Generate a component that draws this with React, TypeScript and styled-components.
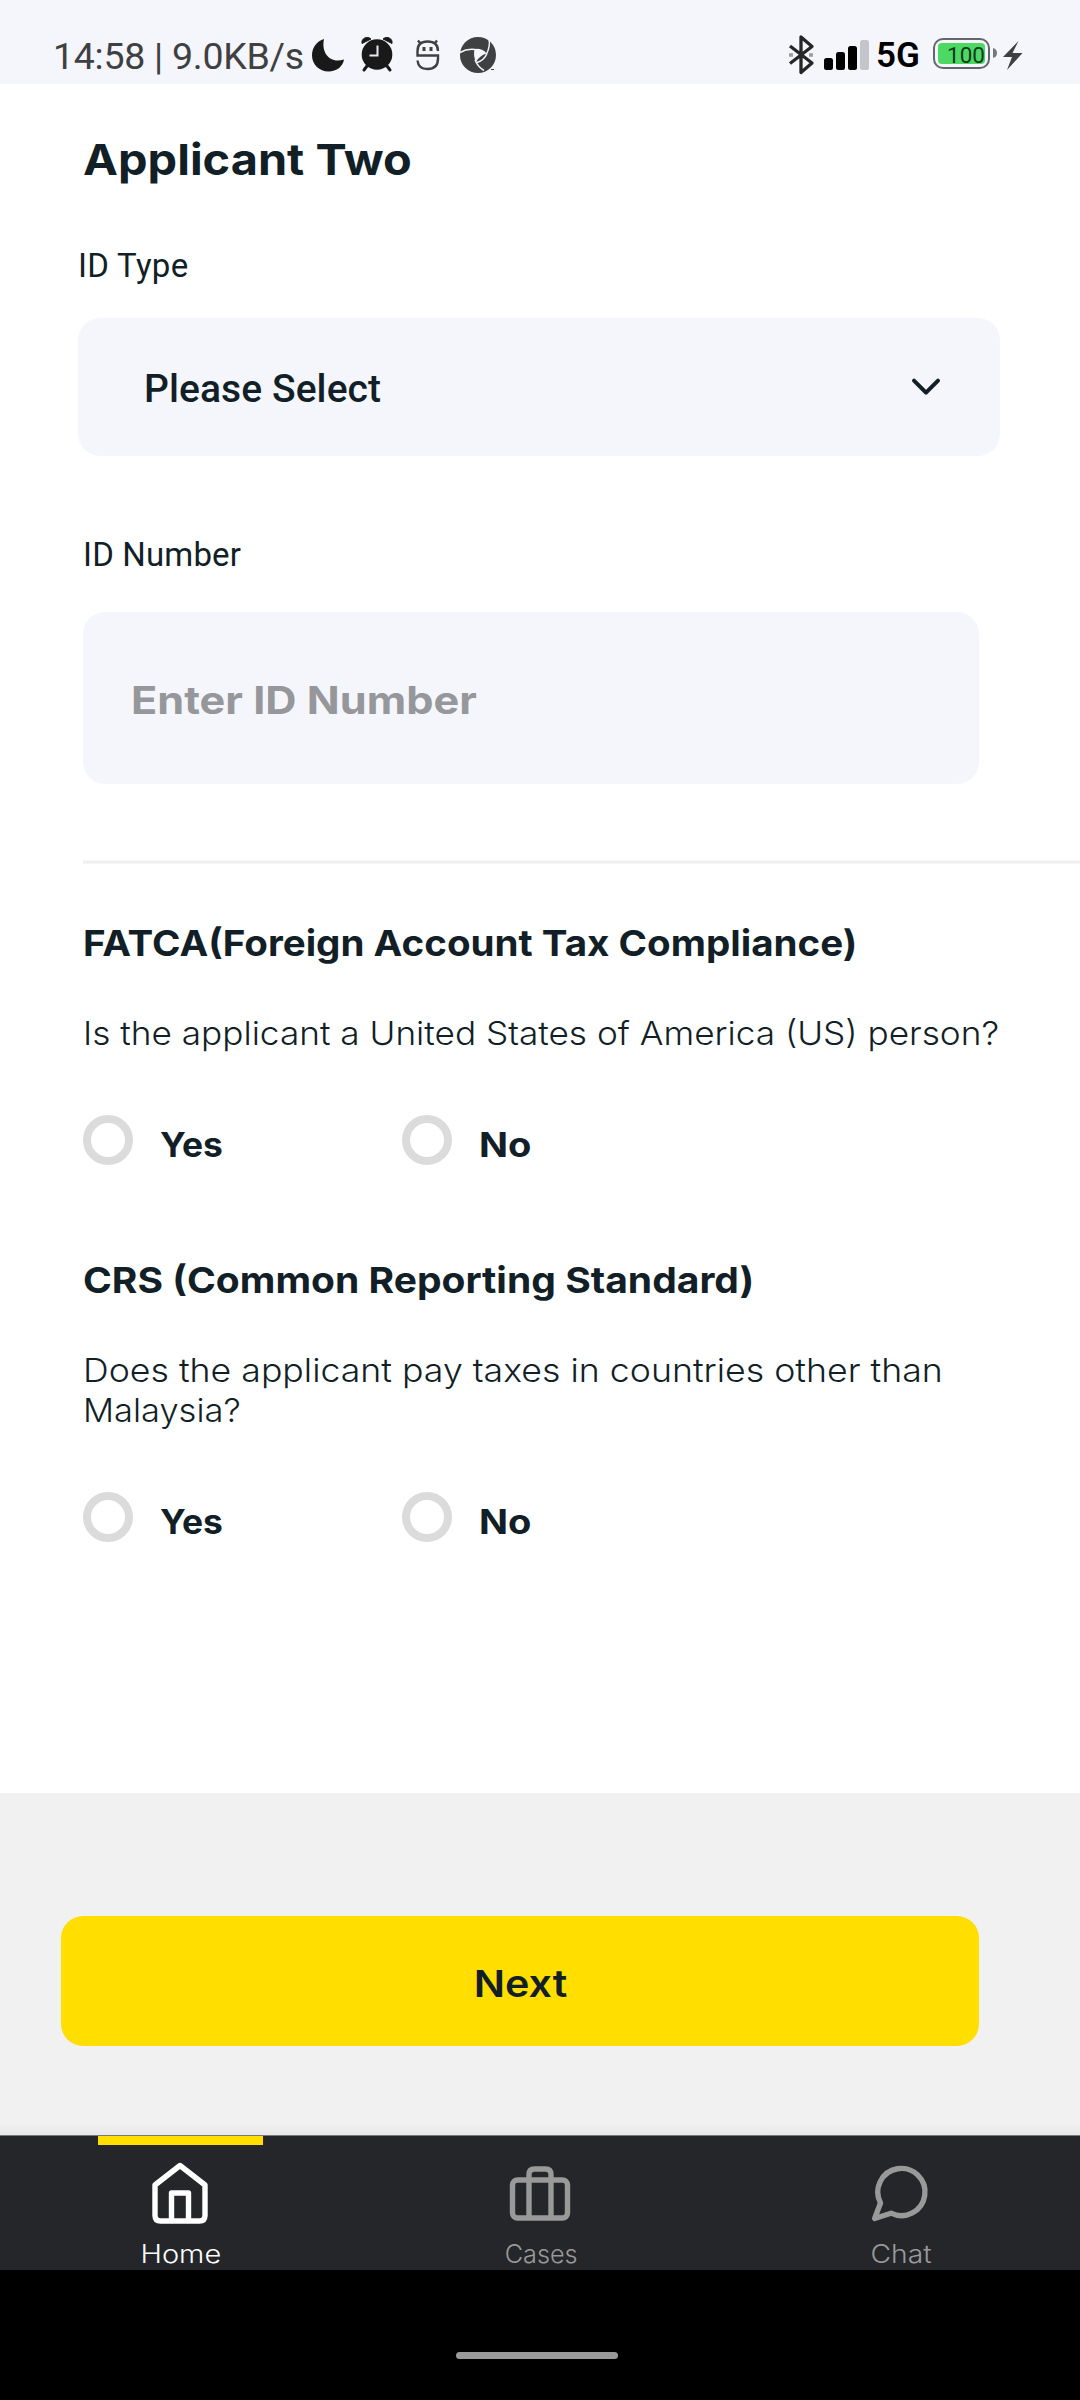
import React from "react";
import styled, { createGlobalStyle } from "styled-components";

const ink = "#121f27";
const display = `Inter, "Open Sans", sans-serif`;
const system = `Roboto, "Noto Sans", sans-serif`;

const GlobalStyle = createGlobalStyle`
  * { box-sizing: border-box; }
  body { margin: 0; background: #fff; color: ${ink}; font-family: ${display}; }
  h1, h2, p { margin: 0; }
  svg { display: block; flex: none; }
`;

const Screen = styled.div`
  display: flex;
  flex-direction: column;
  width: 1080px;
  height: 2400px;
  overflow: hidden;
  background: #fff;
`;

/* Widens the letterforms of the display face. */
const Wide = styled.span<{ $by: number; $center?: boolean }>`
  display: block;
  width: max-content;
  transform: scaleX(${(p) => p.$by});
  transform-origin: ${(p) => (p.$center ? "center" : "left")};
`;

const StatusBar = styled.header`
  display: flex;
  justify-content: space-between;
  height: 84px;
  padding: 27px 57px 0 53px;
  background: #f4f6fb;
  color: #3e4042;
  font-family: ${system};
`;
const StatusGroup = styled.div`
  display: flex;
  align-items: center;
  height: 56px;
`;
const Clock = styled.span`
  width: 258px;
  padding-top: 1px;
  font-size: 37.5px;
  line-height: 56px;
  letter-spacing: -0.27px;
  white-space: nowrap;
`;
const Network = styled.span`
  width: 63px;
  padding: 1px 0 0 6px;
  color: #000;
  font: 600 35px/56px ${system};
`;
const Battery = styled.span`
  display: flex;
  width: 57px;
  height: 31px;
  margin-top: -3px;
  padding: 3px;
  border: 2.5px solid #65666b;
  border-radius: 10px;
`;
const BatteryLevel = styled.span`
  flex: 1;
  border-radius: 4px;
  background: #4bd964;
  color: #15391c;
  font-size: 22.5px;
  line-height: 24px;
  text-align: right;
`;

const Form = styled.main`
  display: flex;
  flex-direction: column;
  align-items: flex-start;
  height: 1709px;
  padding: 50px 0 0 83px;
`;
const Title = styled.h1`
  font-size: 43px;
  font-weight: 700;
  line-height: 50px;
`;
const FieldLabel = styled.label<{ $top: number; $spacing: number; $outset?: boolean }>`
  margin: ${(p) => p.$top}px 0 0 ${(p) => (p.$outset ? -5 : 0)}px;
  font: 400 33px/40px ${system};
  letter-spacing: ${(p) => p.$spacing}px;
`;
const Select = styled.div`
  display: flex;
  align-items: center;
  justify-content: space-between;
  width: 922px;
  height: 138px;
  margin: 32px 0 0 -5px;
  padding: 0 58px 0 66px;
  border-radius: 22px;
  background: #f4f6fb;
  font: 500 39px/48px ${system};
`;
const SelectValue = styled.span`
  padding-top: 4px;
  letter-spacing: 0.08px;
`;
const Input = styled.div`
  display: flex;
  align-items: center;
  width: 896px;
  height: 172px;
  margin-top: 37px;
  padding: 3px 0 0 48px;
  border-radius: 22px;
  background: #f4f6fb;
  color: #96979b;
  font-size: 38px;
  font-weight: 700;
`;
const Divider = styled.div`
  align-self: stretch;
  height: 4px;
  margin-top: 76px;
  border: solid #f6f6f6;
  border-width: 1px 0;
  background: #efefef;
`;
const SectionTitle = styled.h2<{ $top: number }>`
  margin-top: ${(p) => p.$top}px;
  font-size: 36px;
  font-weight: 700;
  line-height: 44px;
`;
const Question = styled.p`
  margin-top: 48px;
  font-size: 33px;
  font-weight: 300;
  line-height: 40px;
`;
const RadioRow = styled.div`
  display: grid;
  grid-template-columns: 319px 319px;
  height: 50px;
  margin-top: 62px;
`;
const Option = styled.label`
  display: flex;
  gap: 27px;
  font-size: 34px;
  font-weight: 700;
  line-height: 60px;
`;
const Ring = styled.span`
  width: 50px;
  height: 50px;
  border: 8px solid #dbdbdb;
  border-radius: 50%;
`;

const Actions = styled.section`
  height: 342px;
  padding: 123px 101px 0 61px;
  background: linear-gradient(#f1f1f1 330px, #e9e9e9 342px);
`;
const NextButton = styled.button`
  display: flex;
  align-items: center;
  justify-content: center;
  width: 918px;
  height: 130px;
  padding: 5px 0 0 2px;
  border: 0;
  border-radius: 22px;
  background: #ffde00;
  color: ${ink};
  font: 600 37.5px/48px ${display};
`;

const TabBar = styled.nav`
  display: grid;
  grid-template-columns: repeat(3, 360px);
  height: 135px;
  border-top: 1px solid #77787a;
  background: #25262a;
`;
const Tab = styled.a<{ $active?: boolean }>`
  display: flex;
  flex-direction: column;
  align-items: center;
  color: ${(p) => (p.$active ? "#fff" : "#999")};
  font-size: 25px;
  font-weight: 300;
  line-height: 30px;
`;
const Indicator = styled.span<{ $active?: boolean }>`
  width: 165px;
  height: 9px;
  margin-bottom: 14px;
  background: ${(p) => (p.$active ? "#ffde00" : "transparent")};
`;
const TabLabel = styled.span`
  margin-top: 14px;
  padding-left: 2px;
`;
const SystemNav = styled.footer`
  display: flex;
  justify-content: center;
  height: 130px;
  padding: 82px 7px 0 0;
  background: #000;
`;
const Pill = styled.span`
  width: 162px;
  height: 7px;
  border-radius: 4px;
  background: #999;
`;

const StatusIcons = () => (
  <svg width="190" height="56" viewBox="311 27 190 56">
    <path d="M324 39c-3 14 6 25 20 20.500c-1 7-7.500 12-15.500 12c-9 0-16.500-7-16.500-16c0-8 5-14.500 12-16.500z" fill="#191919" />
    <g fill="#191919">
      <circle cx="377" cy="54.500" r="15.300" />
      <path d="M362 43.500c-1-5 5-8 9-4.500zM392 43.500c1-5-5-8-9-4.500z" stroke="#191919" strokeLinejoin="round" />
      <path d="M367 66l-3 4M387 66l3 4" stroke="#191919" strokeWidth="3" strokeLinecap="round" />
      <path d="M377.500 45.500v10h-8" fill="none" stroke="#e8e9ed" strokeWidth="2" />
    </g>
    <g fill="none" stroke="#3e4042" strokeWidth="2.400">
      <path d="M438 51c0-6.500-4-9.500-10.500-9.500s-10 3-10 9.500v4.500h20.500v3c0 7-4 10.500-10.500 10.500s-9.500-3-10-8.500M420 43l-2-2.500M435 43l2-2.500" />
      <path d="M424 47v4M431 47v4" strokeWidth="3" />
    </g>
    <circle cx="478" cy="55" r="18" fill="#3e4042" />
    <path
      d="M489 38.500q1.500 8-2.500 15.500M460 52.500q7-4 15-3M475 60q3 7 9 10.500M477 62.500q7-2 10-9"
      fill="none"
      stroke="#f4f6fb"
      strokeWidth="1.500"
    />
    <path d="M474.500 49q8-1 12 4.500q-7 2-10.500 8.500q-3-6-1.500-13z" fill="#f4f6fb" />
    <path d="M491 69.500h3" stroke="#3e4042" />
  </svg>
);

const Signals = () => (
  <svg width="82" height="56" viewBox="788 27 82 56">
    <path d="M790 46l22 17-11 9.500V37l11 9.500-22 17" fill="none" stroke="#252628" strokeWidth="3.300" strokeLinejoin="round" />
    <path d="M789 55h4M809 55h4" stroke="#9b9ca0" strokeWidth="3.500" />
    <rect x="824" y="58" width="9" height="12" rx="2.500" />
    <rect x="836" y="52" width="9" height="18" rx="2.500" />
    <rect x="848" y="46" width="9" height="24" rx="2.500" />
    <rect x="860" y="40" width="9" height="30" rx="2.500" fill="#c4c5ca" />
  </svg>
);

const Charging = () => (
  <svg width="33" height="56" viewBox="990 27 33 56" fill="#3e4042">
    <path d="M993 48q4 1 4 5t-4 5z" fill="#76777b" />
    <path d="M1018.500 41l-15.500 16h9l-5 13 15.500-17h-10z" />
  </svg>
);

const Chevron = () => (
  <svg width="32" height="20" viewBox="910 377 32 20" fill="none" stroke={ink} strokeWidth="4" strokeLinecap="round" strokeLinejoin="round">
    <path d="M914 380.700l12 12 12-12" />
  </svg>
);

const tabIcon = { width: 64, height: 66, fill: "none", stroke: "currentColor", strokeWidth: 5.4, strokeLinecap: "round", strokeLinejoin: "round" } as const;

const HomeIcon = () => (
  <svg {...tabIcon} viewBox="148 2159.500 64 66">
    <path d="M180 2166l25 19.500v30.500q0 5.500-5.500 5.500h-39q-5.500 0-5.500-5.500v-30.500z" />
    <path d="M171.500 2221v-27.500h17v27.500" />
  </svg>
);
const CasesIcon = () => (
  <svg {...tabIcon} viewBox="508 2159.500 64 66">
    <rect x="512.500" y="2180.500" width="55" height="38" rx="5" />
    <path d="M529 2218v-43q0-5.500 5.500-5.500h11q5.500 0 5.500 5.500v43" />
  </svg>
);
const ChatIcon = () => (
  <svg {...tabIcon} viewBox="868 2159.500 64 66">
    <path d="M880.500 2203.500a23.600 23.600 0 1 1 10.500 10.200l-16.300 5.300z" />
  </svg>
);

const options = [
  { text: "Yes", wide: 1.04 },
  { text: "No", wide: 1.12 },
];

const YesNo = () => (
  <RadioRow>
    {options.map((o) => (
      <Option key={o.text}>
        <Ring />
        <Wide $by={o.wide}>{o.text}</Wide>
      </Option>
    ))}
  </RadioRow>
);

const tabs = [
  { text: "Home", wide: 1.16, icon: <HomeIcon />, active: true },
  { text: "Cases", wide: 1.01, icon: <CasesIcon /> },
  { text: "Chat", wide: 1.13, icon: <ChatIcon /> },
];

export default function App() {
  return (
    <Screen>
      <GlobalStyle />
      <StatusBar>
        <StatusGroup>
          <Clock>14:58 | 9.0KB/s</Clock>
          <StatusIcons />
        </StatusGroup>
        <StatusGroup>
          <Signals />
          <Network>5G</Network>
          <Battery>
            <BatteryLevel>100</BatteryLevel>
          </Battery>
          <Charging />
        </StatusGroup>
      </StatusBar>
      <Form>
        <Title>
          <Wide $by={1.091}>Applicant Two</Wide>
        </Title>
        <FieldLabel $top={62} $spacing={0.3} $outset>ID Type</FieldLabel>
        <Select>
          <SelectValue>Please Select</SelectValue>
          <Chevron />
        </Select>
        <FieldLabel $top={79} $spacing={0.15}>ID Number</FieldLabel>
        <Input>
          <Wide $by={1.138}>Enter ID Number</Wide>
        </Input>
        <Divider />
        <SectionTitle $top={57}>
          <Wide $by={1.071}>FATCA(Foreign Account Tax Compliance)</Wide>
        </SectionTitle>
        <Question>
          <Wide $by={1.066}>Is the applicant a United States of America (US) person?</Wide>
        </Question>
        <YesNo />
        <SectionTitle $top={93}>
          <Wide $by={1.084}>CRS (Common Reporting Standard)</Wide>
        </SectionTitle>
        <Question>
          <Wide $by={1.081}>Does the applicant pay taxes in countries other than</Wide>
          <Wide $by={1.045}>Malaysia?</Wide>
        </Question>
        <YesNo />
      </Form>
      <Actions>
        <NextButton>
          <Wide $by={1.1} $center>Next</Wide>
        </NextButton>
      </Actions>
      <TabBar>
        {tabs.map((t) => (
          <Tab key={t.text} $active={t.active}>
            <Indicator $active={t.active} />
            {t.icon}
            <TabLabel>
              <Wide $by={t.wide} $center>{t.text}</Wide>
            </TabLabel>
          </Tab>
        ))}
      </TabBar>
      <SystemNav>
        <Pill />
      </SystemNav>
    </Screen>
  );
}
